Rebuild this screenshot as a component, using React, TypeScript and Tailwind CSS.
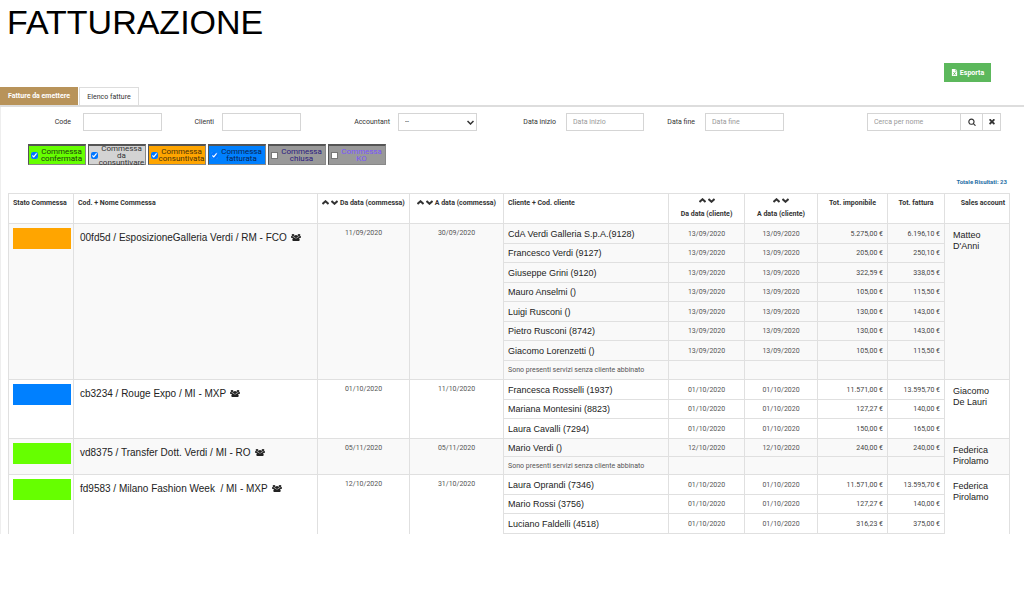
import type { ReactNode } from 'react'
import clsx from 'clsx'
import { FaFileExcel } from 'react-icons/fa'

interface ClientRow {
  name?: string
  date?: string
  net?: string
  total?: string
}

interface Job {
  title: string
  status: string
  from: string
  to: string
  sales: string[]
  rowClass: string
  clients: ClientRow[]
}

const filters = [
  { label: 'Commessa confermata', className: 'bg-[#66ff00] text-[#1c3a10]', checked: true },
  { label: 'Commessa da consuntivare', className: 'bg-[#d3d3d3] text-[#333]', checked: true },
  { label: 'Commessa consuntivata', className: 'bg-[#ffa500] text-[#4a3208]', checked: true },
  { label: 'Commessa fatturata', className: 'bg-[#0080ff] text-[#0a2350]', checked: true },
  { label: 'Commessa chiusa', className: 'bg-[#999] text-[#2b1a80]', checked: false },
  { label: 'Commessa KO', className: 'bg-[#999] text-[#7a55ff]', checked: false },
]

const jobs: Job[] = [
  {
    title: '00fd5d / EsposizioneGalleria Verdi / RM - FCO',
    status: 'bg-[#ffa500]',
    from: '11/09/2020',
    to: '30/09/2020',
    sales: ['Matteo', "D'Anni"],
    rowClass: 'odd:h-5 even:h-[19px]',
    clients: [
      { name: 'CdA Verdi Galleria S.p.A.(9128)', date: '13/09/2020', net: '5.275,00 €', total: '6.196,10 €' },
      { name: 'Francesco Verdi (9127)', date: '13/09/2020', net: '205,00 €', total: '250,10 €' },
      { name: 'Giuseppe Grini (9120)', date: '13/09/2020', net: '322,59 €', total: '338,05 €' },
      { name: 'Mauro Anselmi ()', date: '13/09/2020', net: '105,00 €', total: '115,50 €' },
      { name: 'Luigi Rusconi ()', date: '13/09/2020', net: '130,00 €', total: '143,00 €' },
      { name: 'Pietro Rusconi (8742)', date: '13/09/2020', net: '130,00 €', total: '143,00 €' },
      { name: 'Giacomo Lorenzetti ()', date: '13/09/2020', net: '105,00 €', total: '115,50 €' },
      {},
    ],
  },
  {
    title: 'cb3234 / Rouge Expo / MI - MXP',
    status: 'bg-[#0080ff]',
    from: '01/10/2020',
    to: '11/10/2020',
    sales: ['Giacomo', 'De Lauri'],
    rowClass: 'odd:h-5 even:h-[19px]',
    clients: [
      { name: 'Francesca Rosselli (1937)', date: '01/10/2020', net: '11.571,00 €', total: '13.595,70 €' },
      { name: 'Mariana Montesini (8823)', date: '01/10/2020', net: '127,27 €', total: '140,00 €' },
      { name: 'Laura Cavalli (7294)', date: '01/10/2020', net: '150,00 €', total: '165,00 €' },
    ],
  },
  {
    title: 'vd8375 / Transfer Dott. Verdi / MI - RO',
    status: 'bg-[#66ff00]',
    from: '05/11/2020',
    to: '05/11/2020',
    sales: ['Federica', 'Pirolamo'],
    rowClass: 'h-[18px]',
    clients: [
      { name: 'Mario Verdi ()', date: '12/10/2020', net: '240,00 €', total: '240,00 €' },
      {},
    ],
  },
  {
    title: 'fd9583 / Milano Fashion Week  / MI - MXP',
    status: 'bg-[#66ff00]',
    from: '12/10/2020',
    to: '31/10/2020',
    sales: ['Federica', 'Pirolamo'],
    rowClass: 'odd:h-5 even:h-[19px]',
    clients: [
      { name: 'Laura Oprandi (7346)', date: '01/10/2020', net: '11.571,00 €', total: '13.595,70 €' },
      { name: 'Mario Rossi (3756)', date: '01/10/2020', net: '127,27 €', total: '140,00 €' },
      { name: 'Luciano Faldelli (4518)', date: '01/10/2020', net: '316,23 €', total: '375,00 €' },
    ],
  },
]

function UsersIcon() {
  return (
    <svg viewBox="0 0 1920 1792" preserveAspectRatio="none" className="ml-1 inline h-[7px] w-[10px] align-baseline" fill="currentColor">
      <path d="M593 896q-162 5-265 128H194q-82 0-138-40.5T0 865q0-353 124-353 6 0 43.5 21t97.5 42.5T384 597q67 0 133-23-5 37-5 66 0 139 81 256zm1071 637q0 120-73 189.5t-194 69.5H523q-121 0-194-69.5T256 1533q0-53 3.5-103.5t14-109T300 1212t43-97.5 62-81 85.5-53.5T602 960q10 0 43 21.5t73 48 107 48 135 21.5 135-21.5 107-48 73-48 43-21.5q61 0 111.5 20t85.5 53.5 62 81 43 97.5 26.500 108.500 14 109 3.500 103.500zM640 256q0 106-75 181t-181 75-181-75-75-181 75-181T384 0t181 75 75 181zm704 384q0 159-112.500 271.500T960 1024 688.500 911.500 576 640t112.500-271.500T960 256t271.500 112.500T1344 640zm576 225q0 78-56 118.500t-138 40.500h-134q-103-123-265-128 81-117 81-256 0-29-5-66 66 23 133 23 59 0 119-21.500t97.500-42.500 43.500-21q124 0 124 353zm-128-609q0 106-75 181t-181 75-181-75-75-181 75-181 181-75 181 75 75 181z" />
    </svg>
  )
}

function SearchIcon() {
  return (
    <svg viewBox="0 0 1664 1792" className="size-2" fill="currentColor">
      <path d="M1152 832q0-185-131.5-316.5T704 384 387.5 515.5 256 832t131.5 316.5T704 1280t316.5-131.5T1152 832zm512 832q0 52-38 90t-90 38q-54 0-90-38l-343-342q-179 124-399 124-143 0-273.5-55.5t-225-150-150-225T0 832t55.5-273.5 150-225 225-150T704 128t273.5 55.5 225 150 150 225T1408 832q0 220-124 399l343 343q37 37 37 90z" />
    </svg>
  )
}

function CloseIcon() {
  return (
    <svg viewBox="100 400 1208 1250" className="size-[6px]" fill="currentColor">
      <path d="M1298 1322q0 40-28 68l-136 136q-28 28-68 28t-68-28l-294-294-294 294q-28 28-68 28t-68-28l-136-136q-28-28-28-68t28-68l294-294-294-294q-28-28-28-68t28-68l136-136q28-28 68-28t68 28l294 294 294-294q28-28 68-28t68 28l136 136q28 28 28 68t-28 68l-294 294 294 294q28 28 28 68z" />
    </svg>
  )
}

function SortArrows() {
  return (
    <span className="inline-flex gap-0.5">
      <button aria-label="Ordine crescente">
        <svg viewBox="0 0 14 10" className="h-[5px] w-[7px]" fill="none" stroke="currentColor" strokeWidth="4">
          <path d="M1 8l6-5.500 6 5.500" />
        </svg>
      </button>
      <button aria-label="Ordine decrescente">
        <svg viewBox="0 0 14 10" className="h-[5px] w-[7px]" fill="none" stroke="currentColor" strokeWidth="4">
          <path d="M1 2l6 5.500L13 2" />
        </svg>
      </button>
    </span>
  )
}

function Label({ id, className, children }: { id: string; className?: string; children: ReactNode }) {
  return (
    <label htmlFor={id} className={clsx('text-right whitespace-nowrap', className)}>
      {children}
    </label>
  )
}

const field = 'h-[18px] w-full min-w-0 border border-[#d5d5d5] bg-white px-1.5 placeholder:text-[#999] outline-none'
const cell = 'border-r border-b border-[#e0e0e0]'

export default function App() {
  return (
    <div className="min-h-screen bg-white font-[Roboto,sans-serif] text-[7px] leading-[10px] text-[#333]">
      <h1 className="px-[7px] pt-0.5 font-['Liberation_Sans',Arial,sans-serif] text-[34px] leading-[40px] text-black">
        FATTURAZIONE
      </h1>

      <div className="flex justify-end pt-[21px] pr-[33px]">
        <button className="flex h-[19px] w-[47px] items-center justify-center gap-0.5 bg-[#5cb85c] font-bold text-white">
          <FaFileExcel className="size-[7px]" />
          Esporta
        </button>
      </div>

      {/* Tabs */}
      <nav className="mt-[5px] flex gap-px">
        <a href="#emettere" className="flex h-[18px] w-[78px] items-center justify-center bg-[#b8935a] font-bold text-white">
          Fatture da emettere
        </a>
        <a href="#elenco" className="flex h-[18px] w-[60px] items-center justify-center border border-b-0 border-[#ddd]">
          Elenco fatture
        </a>
      </nav>

      <main className="border-t-2 border-[#ddd] shadow-[inset_1px_0_0_#eee]">
        {/* Search fields */}
        <form className="grid grid-cols-[83fr_79fr_60fr_79fr_97fr_79fr_89fr_78fr_61fr_79fr_83fr_134fr_23fr] items-center pt-1.5">
          <Label id="code" className="pr-3">Code</Label>
          <input id="code" className={field} />
          <Label id="clienti" className="pr-2">Clienti</Label>
          <input id="clienti" className={field} />
          <Label id="accountant" className="pr-2">Accountant</Label>
          <div className="relative">
            <select id="accountant" className={clsx(field, 'appearance-none')}>
              <option>--</option>
            </select>
            <svg viewBox="0 0 14 10" className="pointer-events-none absolute top-[7px] right-[3px] h-[5px] w-[7px]" fill="none" stroke="#333" strokeWidth="3">
              <path d="M1 2l6 6 6-6" />
            </svg>
          </div>
          <Label id="inizio" className="pr-2.5">Data inizio</Label>
          <input id="inizio" placeholder="Data inizio" className={field} />
          <Label id="fine" className="pr-2.5">Data fine</Label>
          <input id="fine" placeholder="Data fine" className={field} />
          <div className="col-start-12 flex">
            <input aria-label="Cerca" placeholder="Cerca per nome" className={clsx(field, 'flex-1')} />
            <button type="button" aria-label="Cerca" className="flex h-[18px] w-[21px] shrink-0 items-center justify-center border-y border-[#d5d5d5]">
              <SearchIcon />
            </button>
            <button type="button" aria-label="Cancella" className="flex h-[18px] w-[19px] shrink-0 items-center justify-center border border-[#d5d5d5]">
              <CloseIcon />
            </button>
          </div>
        </form>

        {/* Status filters */}
        <div className="mt-[13px] flex flex-wrap gap-0.5 pl-7">
          {filters.map((f) => (
            <label
              key={f.label}
              className={clsx(
                'flex h-[21px] w-[58px] items-center border border-t-2 border-[#888] border-t-[#555] border-l-[#555] pl-0.5 text-[8px] leading-[7px]',
                f.className
              )}
            >
              <input
                type="checkbox"
                defaultChecked={f.checked}
                className="size-[7px] shrink-0 not-checked:appearance-none not-checked:border not-checked:border-[#777] not-checked:bg-white"
              />
              <span className="min-w-0 flex-1 text-center">{f.label}</span>
            </label>
          ))}
        </div>

        <p className="mt-3 pr-[17px] text-right text-[6px] font-bold text-[#1f6fa5]">Totale Risultati: 23</p>

        <div className="mt-1.5 pr-[14px] pl-2">
          <table className="w-full table-fixed border-separate border-spacing-0 border-t border-l border-[#e0e0e0]">
            <colgroup>
              <col className="w-[65px]" />
              <col className="w-[244px]" />
              <col className="w-[92px]" />
              <col className="w-[94px]" />
              <col className="w-[165px]" />
              <col className="w-[76px]" />
              <col className="w-[73px]" />
              <col className="w-[70px]" />
              <col className="w-[57px]" />
              <col className="w-[65px]" />
            </colgroup>
            <thead>
              <tr className="h-[30px] align-top whitespace-nowrap [&>th]:pt-1 [&>th]:font-bold">
                <th className={clsx(cell, 'pl-1 text-left')}>Stato Commessa</th>
                <th className={clsx(cell, 'pl-1 text-left')}>Cod. + Nome Commessa</th>
                <th className={cell}><SortArrows /> Da data (commessa)</th>
                <th className={cell}><SortArrows /> A data (commessa)</th>
                <th className={clsx(cell, 'pl-1 text-left')}>Cliente + Cod. cliente</th>
                <th className={cell}>
                  <div className="flex flex-col items-center gap-1.5"><SortArrows />Da data (cliente)</div>
                </th>
                <th className={cell}>
                  <div className="flex flex-col items-center gap-1.5"><SortArrows />A data (cliente)</div>
                </th>
                <th className={cell}>Tot. imponibile</th>
                <th className={cell}>Tot. fattura</th>
                <th className={clsx(cell, 'pr-1 text-right')}>Sales account</th>
              </tr>
            </thead>
            {jobs.map((job, i) => {
              const span = job.clients.length
              const tall = clsx('border-r border-[#e0e0e0] align-top', i < jobs.length - 1 && 'border-b')
              return (
                <tbody key={job.title} className={i % 2 === 0 ? 'bg-[#f9f9f9]' : 'bg-white'}>
                  {job.clients.map((c, j) => (
                    <tr key={j} className={job.rowClass}>
                      {j === 0 && (
                        <>
                          <td rowSpan={span} className={clsx(tall, 'pt-1 pr-0.5 pl-1')}>
                            <div className={clsx('h-[21px]', job.status)} />
                          </td>
                          <td rowSpan={span} className={clsx(tall, "pt-2 pl-1.5 font-['Liberation_Sans',Arial,sans-serif] text-[10px] leading-3 whitespace-pre text-[#222]")}>
                            {job.title}
                            <UsersIcon />
                          </td>
                          <td rowSpan={span} className={clsx(tall, 'pt-1 text-center text-[#555]')}>{job.from}</td>
                          <td rowSpan={span} className={clsx(tall, 'pt-1 text-center text-[#555]')}>{job.to}</td>
                        </>
                      )}
                      {c.name ? (
                        <td className={clsx(cell, "pl-1 font-['Liberation_Sans',Arial,sans-serif] text-[9px] text-[#222]")}>{c.name}</td>
                      ) : (
                        <td className={clsx(cell, 'pl-1 text-[#555]')}>Sono presenti servizi senza cliente abbinato</td>
                      )}
                      <td className={clsx(cell, 'text-center text-[#555]')}>{c.date}</td>
                      <td className={clsx(cell, 'text-center text-[#555]')}>{c.date}</td>
                      <td className={clsx(cell, 'pr-1 text-right text-[#444]')}>{c.net}</td>
                      <td className={clsx(cell, 'pr-1 text-right text-[#444]')}>{c.total}</td>
                      {j === 0 && (
                        <td rowSpan={span} className={clsx(tall, "pt-1.5 pl-2 font-['Liberation_Sans',Arial,sans-serif] text-[9px] leading-[11px] text-[#222]")}>
                          {job.sales[0]}
                          <br />
                          {job.sales[1]}
                        </td>
                      )}
                    </tr>
                  ))}
                </tbody>
              )
            })}
          </table>
        </div>
      </main>
    </div>
  )
}
